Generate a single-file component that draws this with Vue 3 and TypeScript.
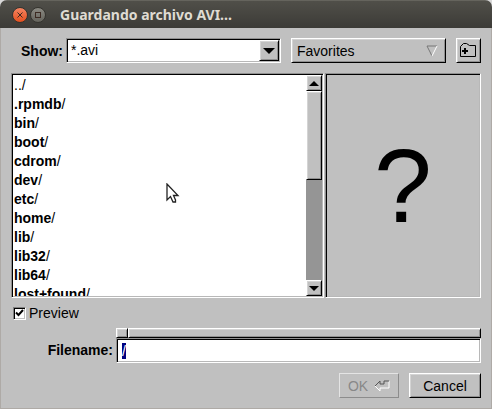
<script setup lang="ts">
import { onMounted, ref } from 'vue'

const filters: string[] = ['*.avi']
const filter = ref<string>('*.avi')
const entries: string[] = [
  '..', '.rpmdb', 'bin', 'boot', 'cdrom', 'dev', 'etc',
  'home', 'lib', 'lib32', 'lib64', 'lost+found',
]
const preview = ref<boolean>(true)
const filename = ref<string>('/')
const filenameInput = ref<HTMLInputElement | null>(null)

onMounted(() => {
  filenameInput.value?.focus()
  filenameInput.value?.select()
})
</script>

<template>
  <div class="window">
    <header class="titlebar">
      <button class="wm close" type="button" aria-label="Close">
        <svg viewBox="0 0 14 14"><path d="M4.500 4.500l5 5M9.500 4.500l-5 5" /></svg>
      </button>
      <button class="wm maximize" type="button" aria-label="Maximize">
        <svg viewBox="0 0 14 14"><rect x="4.500" y="4.500" width="5" height="5" /></svg>
      </button>
      <h1 class="title">Guardando archivo AVI...</h1>
    </header>

    <main class="body">
      <div class="toolbar">
        <label class="caption show-caption" for="show">Show:</label>
        <div class="combo sunken">
          <select id="show" v-model="filter" class="combo-select">
            <option v-for="f in filters" :key="f">{{ f }}</option>
          </select>
          <span class="combo-arrow raised">
            <svg width="12" height="6" viewBox="0 0 12 6"><path d="M0 0h12L6 6z" /></svg>
          </span>
        </div>
        <button class="button raised favorites" type="button">
          <span>Favorites</span>
          <svg width="12" height="12" viewBox="0 0 12 12" fill="none">
            <path d="M11 1H1l5 10" stroke="#777" />
            <path d="M11 1L6 11" stroke="#fff" />
          </svg>
        </button>
        <button class="button raised new-folder" type="button" aria-label="New folder">
          <svg width="17" height="15" viewBox="0 0 17 15">
            <path d="M0.500 13.500V3.500l3-3h3l3 2h6v11z" fill="none" stroke="#000" />
            <path d="M2 7h2V5h2v2h2v2H6v2H4v-2H2z" />
          </svg>
        </button>
      </div>

      <div class="panes">
        <div class="browser sunken">
          <ul class="files">
            <li v-for="name in entries" :key="name">
              <span :class="{ folder: name !== '..' }">{{ name }}</span>/
            </li>
          </ul>
          <div class="scrollbar">
            <button class="scroll-button raised" type="button" aria-label="Scroll up">
              <svg width="10" height="5" viewBox="0 0 10 5"><path d="M0 5h10L5 0z" /></svg>
            </button>
            <div class="track"><div class="thumb raised"></div></div>
            <button class="scroll-button raised" type="button" aria-label="Scroll down">
              <svg width="10" height="5" viewBox="0 0 10 5"><path d="M0 0h10L5 5z" /></svg>
            </button>
          </div>
        </div>
        <div class="preview-pane sunken">?</div>
      </div>

      <label class="preview-toggle">
        <input v-model="preview" class="box" type="checkbox" />
        <svg v-if="preview" class="tick" width="9" height="8" viewBox="0 0 9 8">
          <path d="M1 3.500L3.500 6L8 1" fill="none" stroke="#000" stroke-width="2" />
        </svg>
        Preview
      </label>

      <div class="filename-row">
        <label class="caption filename-caption" for="filename">Filename:</label>
        <div class="filename-field">
          <div class="path-bar">
            <button class="segment raised root" type="button" aria-label="Root folder"></button>
            <div class="segment raised rest"></div>
          </div>
          <input
            id="filename"
            ref="filenameInput"
            v-model="filename"
            class="filename sunken"
            type="text"
            spellcheck="false"
          />
        </div>
      </div>

      <footer class="actions">
        <button class="button raised ok" type="button" disabled>
          OK
          <svg width="16" height="12" viewBox="0 0 16 12" fill="none">
            <path d="M15 1V8H6V11L1 6" stroke="#fff" />
            <path d="M1 6L6 1V4H10V1H15" stroke="#555" />
          </svg>
        </button>
        <button class="button raised cancel" type="button">Cancel</button>
      </footer>
    </main>

    <svg class="pointer" width="14" height="21" viewBox="0 0 14 21">
      <path
        d="M1 1V17L4.500 13.500L7 19H9.500V17L7.500 12.500H12Z"
        fill="#fff"
        stroke="#222"
        stroke-width="1.300"
      />
    </svg>
  </div>
</template>

<style>
html,
body {
  margin: 0;
  background: #d8d8d8;
}
</style>

<style scoped>
.window {
  position: relative;
  box-sizing: border-box;
  display: flex;
  flex-direction: column;
  height: 100vh;
  overflow: hidden;
  border-radius: 7px 7px 0 0;
  background: #c0c0c0;
  color: #000;
  font: 14px/19px "Liberation Sans", Arial, sans-serif;
}

button,
input,
select {
  box-sizing: border-box;
  margin: 0;
  padding: 0;
  border-radius: 0;
  color: inherit;
  font: inherit;
  outline: none;
}

svg {
  display: block;
  flex: none;
}

.titlebar {
  display: flex;
  flex: none;
  align-items: center;
  gap: 2px;
  box-sizing: border-box;
  height: 28px;
  padding: 0 12px;
  border-top: 1px solid #65645d;
  background: linear-gradient(#504f49, #3c3b37);
}

.titlebar .wm {
  width: 16px;
  height: 16px;
  border: 1px solid #35342f;
  border-radius: 50%;
}

.wm svg {
  width: 14px;
  height: 14px;
  fill: none;
  stroke: #3c2a22;
  stroke-width: 1;
}

.close {
  background: linear-gradient(#f58461, #e4501f);
}

.maximize {
  background: linear-gradient(#8a8982, #64635c);
}

.title {
  margin: 0 0 0 12px;
  color: #dfdbd2;
  font: bold 14px/20px "Noto Sans", "Open Sans", sans-serif;
}

.body {
  display: flex;
  flex: 1;
  flex-direction: column;
  min-height: 0;
  padding: 10px 10px 10px 11px;
  border: solid #aeaaa6;
  border-width: 0 1px 1px 0;
  box-shadow: inset 1px 0 #aeaaa6;
}

.raised {
  box-sizing: border-box;
  border: 1px solid;
  border-color: #fff #000 #000 #fff;
  background: #c0c0c0;
  box-shadow: inset 1px 1px #d4d4d4, inset -1px -1px #909090;
}

.sunken {
  box-sizing: border-box;
  border: 1px solid;
  border-color: #909090 #fff #fff #909090;
  box-shadow: inset 1px 1px #000, inset -1px -1px #b8b8b8;
}

.toolbar {
  display: flex;
  flex: none;
  height: 25px;
}

.caption {
  flex: none;
  font-weight: bold;
  line-height: 26px;
  text-align: right;
}

.show-caption {
  width: 52px;
  margin-right: 3px;
}

.combo {
  position: relative;
  flex: 1;
  padding: 1px;
  background: #fff;
}

.combo-select {
  display: block;
  width: 100%;
  height: 100%;
  padding-left: 3px;
  border: 0;
  background: transparent;
  appearance: none;
}

.combo-arrow {
  position: absolute;
  top: 1px;
  right: 1px;
  bottom: 1px;
  display: flex;
  align-items: center;
  justify-content: center;
  width: 20px;
  pointer-events: none;
}

.button {
  display: flex;
  align-items: center;
  justify-content: center;
  height: 25px;
  padding-top: 1px;
}

.favorites {
  justify-content: space-between;
  width: 155px;
  margin: 0 10px;
  padding: 1px 7px 0 5px;
}

.new-folder {
  width: 25px;
  padding: 0;
}

.panes {
  display: flex;
  flex: 1;
  gap: 1px;
  min-height: 0;
  margin-top: 10px;
}

.browser {
  display: flex;
  flex: 2;
  min-width: 0;
  padding: 1px;
  background: #fff;
}

.files {
  flex: 1;
  margin: 0;
  padding: 1px 0 0 1px;
  overflow: hidden;
  list-style: none;
}

.folder {
  font-weight: bold;
}

.scrollbar {
  display: flex;
  flex: none;
  flex-direction: column;
  width: 16px;
}

.scroll-button {
  display: flex;
  flex: none;
  align-items: center;
  justify-content: center;
  height: 16px;
}

.track {
  flex: 1;
  background: #959595;
}

.thumb {
  height: 47%;
}

.preview-pane {
  display: flex;
  flex: 1;
  align-items: center;
  justify-content: center;
  min-width: 0;
  font-size: 104px;
  line-height: 104px;
}

.preview-toggle {
  position: relative;
  display: flex;
  flex: none;
  align-items: center;
  align-self: flex-start;
  gap: 3px;
  height: 20px;
  margin: 5px 0 5px 2px;
}

.box {
  width: 13px;
  height: 13px;
  border: 1px solid;
  border-color: #808080 #fff #fff #808080;
  background: #fff;
  box-shadow: inset 1px 1px #000, inset -1px -1px #c0c0c0;
  appearance: none;
}

.tick {
  position: absolute;
  top: 6px;
  left: 2px;
  pointer-events: none;
}

.filename-row {
  display: flex;
  flex: none;
  align-items: flex-end;
  gap: 3px;
}

.filename-caption {
  width: 102px;
  line-height: 25px;
}

.filename-field {
  flex: 1;
  min-width: 0;
}

.path-bar {
  display: flex;
  height: 10px;
}

.segment {
  height: 10px;
}

.root {
  width: 12px;
}

.rest {
  flex: 1;
}

.filename {
  display: block;
  width: 100%;
  height: 25px;
  padding: 0 5px;
  background: #fff;
}

.filename::selection {
  background: #000080;
  color: #fff;
}

.actions {
  display: flex;
  flex: none;
  justify-content: flex-end;
  gap: 10px;
  margin-top: 10px;
}

.ok {
  gap: 6px;
  width: 60px;
  border-color: #e4e4e4 #8c8c8c #8c8c8c #e4e4e4;
  box-shadow: none;
  color: #888;
}

.cancel {
  width: 72px;
}

.pointer {
  position: absolute;
  top: 183px;
  left: 166px;
  pointer-events: none;
}
</style>
